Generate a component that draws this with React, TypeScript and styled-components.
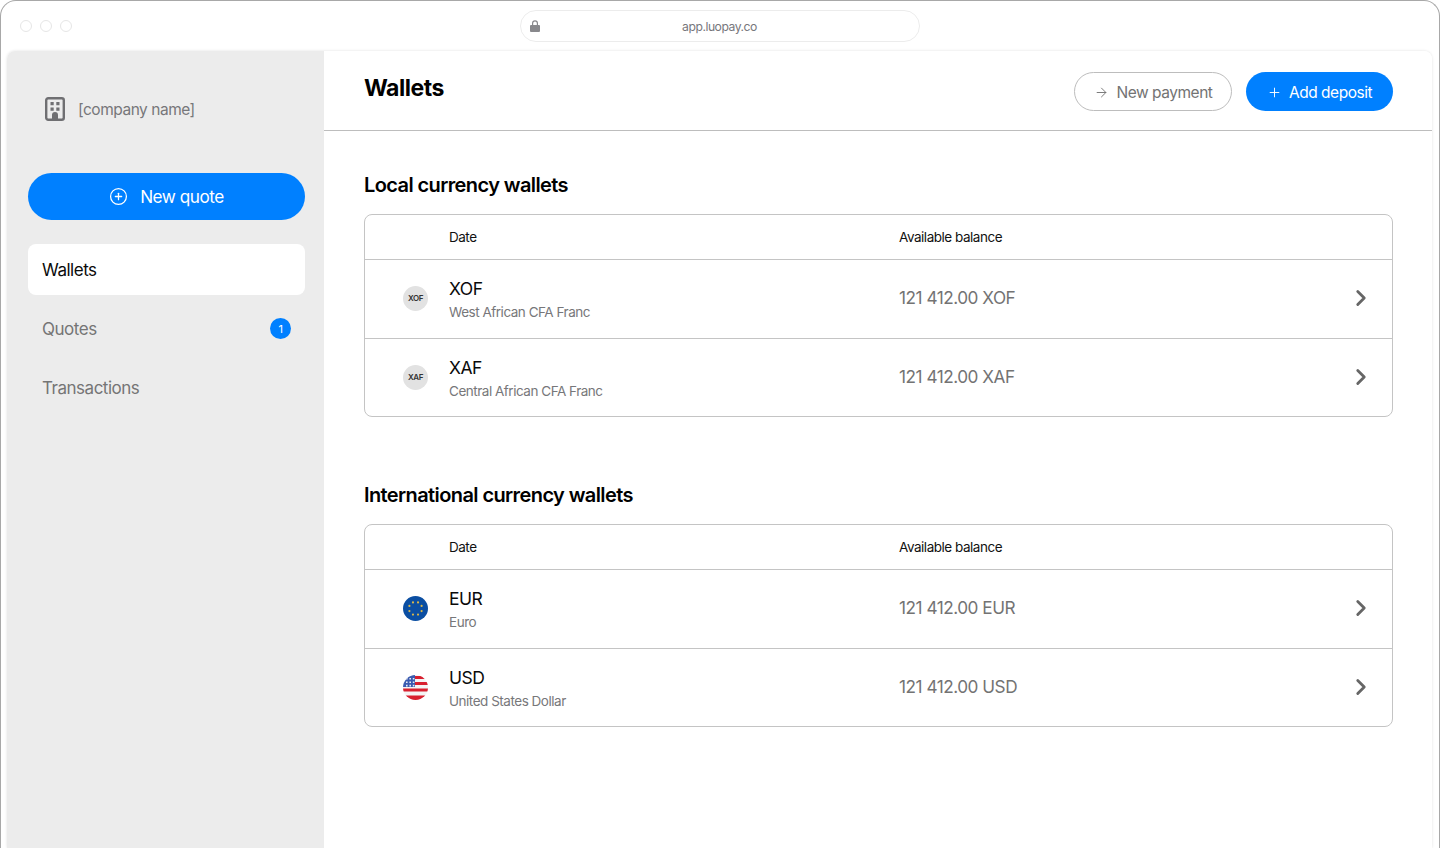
import React from 'react';
import styled, { createGlobalStyle } from 'styled-components';
import { ChevronRight, CirclePlus, Plus, ArrowRight } from 'lucide-react';

const GlobalStyle = createGlobalStyle`
  html, body {
    margin: 0;
    height: 100%;
    background: #fff;
    overflow: hidden;
  }
  body {
    font-family: Inter, "Liberation Sans", sans-serif;
    letter-spacing: -0.03em;
  }
  * {
    box-sizing: border-box;
  }
`;

const BrowserWindow = styled.div`
  height: 848px;
  display: flex;
  flex-direction: column;
  background: #fff;
  border: 1px solid #a8a8a8;
  border-bottom: none;
  border-radius: 16px 16px 0 0;
  overflow: hidden;
`;

const TitleBar = styled.div`
  flex: none;
  height: 50px;
  display: grid;
  grid-template-columns: 1fr 400px 1fr;
  align-items: center;
  padding: 0 20px 0 19px;
`;

const Dots = styled.div`
  display: flex;
  gap: 8px;
  margin-top: -1px;
`;

const Dot = styled.span`
  width: 12px;
  height: 12px;
  border-radius: 50%;
  border: 1px solid #e6e6e6;
`;

const AddressBar = styled.div`
  position: relative;
  height: 32px;
  margin-top: -1px;
  padding-top: 2px;
  display: flex;
  align-items: center;
  justify-content: center;
  border: 1px solid #ececec;
  border-radius: 16px;
  font-size: 12.2px;
  color: #77777c;
`;

const LockIcon = styled.svg`
  position: absolute;
  left: 9px;
  top: 9px;
`;

const Frame = styled.div`
  flex: 1;
  min-height: 0;
  display: flex;
  margin: 0 7px 0 6px;
  border-radius: 8px 8px 0 0;
  box-shadow: 0 0 3px rgba(0, 0, 0, 0.12);
  overflow: hidden;
`;

const Sidebar = styled.aside`
  flex: none;
  width: 317px;
  background: #ececec;
  padding: 45px 19px 0 21px;
`;

const Company = styled.div`
  height: 26px;
  display: flex;
  align-items: center;
  gap: 13px;
  padding-left: 17px;
  font-size: 15.5px;
  color: #77777a;
`;

const PrimaryButton = styled.button<{ $large?: boolean }>`
  display: flex;
  align-items: center;
  justify-content: center;
  gap: ${props => (props.$large ? '12px' : '7px')};
  width: ${props => (props.$large ? '100%' : '147px')};
  height: ${props => (props.$large ? '47px' : '39px')};
  margin-top: ${props => (props.$large ? '51px' : '0')};
  padding: ${props => (props.$large ? '0' : '1px 0 0')};
  background: #0080ff;
  border: none;
  border-radius: 24px;
  color: #fff;
  font-family: inherit;
  letter-spacing: inherit;
  font-size: ${props => (props.$large ? '17.2px' : '15.5px')};
`;

const OutlineButton = styled.button`
  display: flex;
  align-items: center;
  justify-content: center;
  gap: 8px;
  width: 158px;
  height: 39px;
  padding: 1px 0 0;
  background: #fff;
  border: 1px solid #bdbdbd;
  border-radius: 20px;
  color: #737373;
  font-family: inherit;
  letter-spacing: inherit;
  font-size: 15.5px;
`;

const Nav = styled.nav`
  display: flex;
  flex-direction: column;
  gap: 8px;
  margin-top: 24px;
`;

const NavItem = styled.div<{ $active?: boolean }>`
  height: 51px;
  display: flex;
  align-items: center;
  justify-content: space-between;
  padding: 0 14px;
  border-radius: 8px;
  background: ${props => (props.$active ? '#fff' : 'transparent')};
  color: ${props => (props.$active ? '#0a0a0a' : '#757575')};
  font-size: 17px;
`;

const Badge = styled.span`
  width: 21px;
  height: 21px;
  display: flex;
  align-items: center;
  justify-content: center;
  border-radius: 50%;
  background: #0080ff;
  color: #fff;
  font-size: 11px;
`;

const Main = styled.main`
  flex: 1;
  min-width: 0;
  background: #fff;
`;

const Header = styled.header`
  height: 80px;
  display: flex;
  align-items: flex-start;
  justify-content: space-between;
  padding: 0 39px 0 40px;
  border-bottom: 1px solid #bdbdbd;
`;

const Title = styled.h1`
  margin: 20px 0 0;
  font-size: 23px;
  line-height: 34px;
  font-weight: 700;
  color: #000;
`;

const Actions = styled.div`
  display: flex;
  gap: 14px;
  margin-top: 21px;
`;

const Content = styled.div`
  padding: 40px 39px 0 40px;
`;

const Section = styled.section`
  & + & {
    margin-top: 64px;
  }
`;

const SectionTitle = styled.h2`
  margin: 0 0 15px;
  font-size: 20px;
  line-height: 28px;
  font-weight: 600;
  letter-spacing: -0.03em;
  color: #000;
`;

const Table = styled.div`
  border: 1px solid #c4c4c4;
  border-radius: 8px;
`;

const Grid = styled.div`
  display: grid;
  grid-template-columns: 84px 450px 1fr 60px;
  align-items: center;
`;

const HeadRow = styled(Grid)`
  height: 44px;
  font-size: 13.5px;
  color: #111;
`;

const Row = styled(Grid)`
  height: 79px;
  padding-bottom: 2px;
  border-top: 1px solid #c4c4c4;

  &:last-child {
    height: 78px;
    padding-bottom: 1px;
  }
`;

const IconCell = styled.div`
  display: flex;
  justify-content: flex-end;
  padding-right: 21px;
  grid-column: 1;
`;

const CodeCircle = styled.div`
  width: 25px;
  height: 25px;
  display: flex;
  align-items: center;
  justify-content: center;
  border-radius: 50%;
  background: #e2e2e2;
  color: #333;
  font-size: 8px;
  font-weight: 600;
`;

const NameCell = styled.div`
  grid-column: 2;
  margin-top: 2px;
  display: flex;
  flex-direction: column;
  gap: 3px;
`;

const Code = styled.div`
  font-size: 17.5px;
  line-height: 22px;
  color: #0a0a0a;
`;

const Name = styled.div`
  font-size: 13.5px;
  line-height: 18px;
  color: #77777a;
`;

const HeadCell = styled.div<{ $col: number }>`
  grid-column: ${props => props.$col};
`;

const Balance = styled.div`
  grid-column: 3;
  margin-top: -1px;
  font-size: 17.2px;
  color: #737373;
`;

const ChevronCell = styled.div`
  grid-column: 4;
  display: flex;
  justify-content: flex-end;
  padding-right: 18px;
  color: #666;
`;

const BuildingIcon = () => (
  <svg width="20" height="24" viewBox="0 0 20 24" fill="none">
    <rect x="1.2" y="1.2" width="17.6" height="21.6" rx="2" stroke="#6f6f72" strokeWidth="2.4" />
    <path fill="#6f6f72" d="M5.5 5h3.2v3.2H5.5zM11.3 5h3.2v3.2h-3.2zM5.5 10.6h3.2v3.2H5.5zM11.3 10.6h3.2v3.2h-3.2zM7 23v-5a3 3 0 0 1 6 0v5z" />
  </svg>
);

const EuroFlag = () => {
  const stars = Array.from({ length: 8 }, (_, i) => {
    const angle = (i * Math.PI) / 4 + Math.PI / 8;
    return { x: 12.5 + 6.6 * Math.sin(angle), y: 12.5 - 6.6 * Math.cos(angle) };
  });
  return (
    <svg width="25" height="25" viewBox="0 0 25 25">
      <circle cx="12.5" cy="12.5" r="12.5" fill="#0b4ea2" />
      {stars.map((s, i) => (
        <circle key={i} cx={s.x} cy={s.y} r="1.1" fill="#d9b84a" />
      ))}
    </svg>
  );
};

const UsdFlag = () => (
  <svg width="25" height="25" viewBox="0 0 25 25">
    <defs>
      <clipPath id="usd-clip">
        <circle cx="12.5" cy="12.5" r="12.5" />
      </clipPath>
    </defs>
    <g clipPath="url(#usd-clip)">
      <rect width="25" height="25" fill="#f4f4f4" />
      <path fill="#d8202f" d="M12 1h13v3H12zM12 7h13v3H12zM0 13.5h25v3H0zM0 20.5h25v5H0z" />
      <rect width="12" height="12" fill="#3a5bb0" />
      <path fill="#e8ecf6" d="M3 3h1.6v1.6H3zM6.4 3H8v1.6H6.4zM9.8 3h1.6v1.6H9.8zM3 6.4h1.6V8H3zM6.4 6.4H8V8H6.4zM9.8 6.4h1.6V8H9.8zM3 9.8h1.6v1.6H3zM6.4 9.8H8v1.6H6.4zM9.8 9.8h1.6v1.6H9.8z" />
    </g>
  </svg>
);

type Wallet = {
  code: string;
  name: string;
  icon: React.ReactNode;
};

const localWallets: Wallet[] = [
  { code: 'XOF', name: 'West African CFA Franc', icon: <CodeCircle>XOF</CodeCircle> },
  { code: 'XAF', name: 'Central African CFA Franc', icon: <CodeCircle>XAF</CodeCircle> },
];

const internationalWallets: Wallet[] = [
  { code: 'EUR', name: 'Euro', icon: <EuroFlag /> },
  { code: 'USD', name: 'United States Dollar', icon: <UsdFlag /> },
];

const WalletTable: React.FC<{ title: string; wallets: Wallet[] }> = ({ title, wallets }) => (
  <Section>
    <SectionTitle>{title}</SectionTitle>
    <Table>
      <HeadRow>
        <HeadCell $col={2}>Date</HeadCell>
        <HeadCell $col={3}>Available balance</HeadCell>
      </HeadRow>
      {wallets.map(wallet => (
        <Row key={wallet.code}>
          <IconCell>{wallet.icon}</IconCell>
          <NameCell>
            <Code>{wallet.code}</Code>
            <Name>{wallet.name}</Name>
          </NameCell>
          <Balance>121 412.00 {wallet.code}</Balance>
          <ChevronCell>
            <ChevronRight size={26} strokeWidth={2.6} />
          </ChevronCell>
        </Row>
      ))}
    </Table>
  </Section>
);

const App: React.FC = () => (
  <>
    <GlobalStyle />
    <BrowserWindow>
      <TitleBar>
        <Dots>
          <Dot />
          <Dot />
          <Dot />
        </Dots>
        <AddressBar>
          <LockIcon width="10" height="12" viewBox="0 0 10 12">
            <path fill="#88888c" d="M1 5h1V3.2a3 3 0 0 1 6 0V5h1a1 1 0 0 1 1 1v5a1 1 0 0 1-1 1H1a1 1 0 0 1-1-1V6a1 1 0 0 1 1-1zm2.2 0h3.6V3.2a1.8 1.8 0 0 0-3.6 0z" />
          </LockIcon>
          app.luopay.co
        </AddressBar>
      </TitleBar>
      <Frame>
        <Sidebar>
          <Company>
            <BuildingIcon />
            [company name]
          </Company>
          <PrimaryButton $large>
            <CirclePlus size={19} strokeWidth={1.6} />
            New quote
          </PrimaryButton>
          <Nav>
            <NavItem $active>Wallets</NavItem>
            <NavItem>
              Quotes
              <Badge>1</Badge>
            </NavItem>
            <NavItem>Transactions</NavItem>
          </Nav>
        </Sidebar>
        <Main>
          <Header>
            <Title>Wallets</Title>
            <Actions>
              <OutlineButton>
                <ArrowRight size={15} strokeWidth={1.5} />
                New payment
              </OutlineButton>
              <PrimaryButton>
                <Plus size={15} strokeWidth={1.5} />
                Add deposit
              </PrimaryButton>
            </Actions>
          </Header>
          <Content>
            <WalletTable title="Local currency wallets" wallets={localWallets} />
            <WalletTable title="International currency wallets" wallets={internationalWallets} />
          </Content>
        </Main>
      </Frame>
    </BrowserWindow>
  </>
);

export default App;
